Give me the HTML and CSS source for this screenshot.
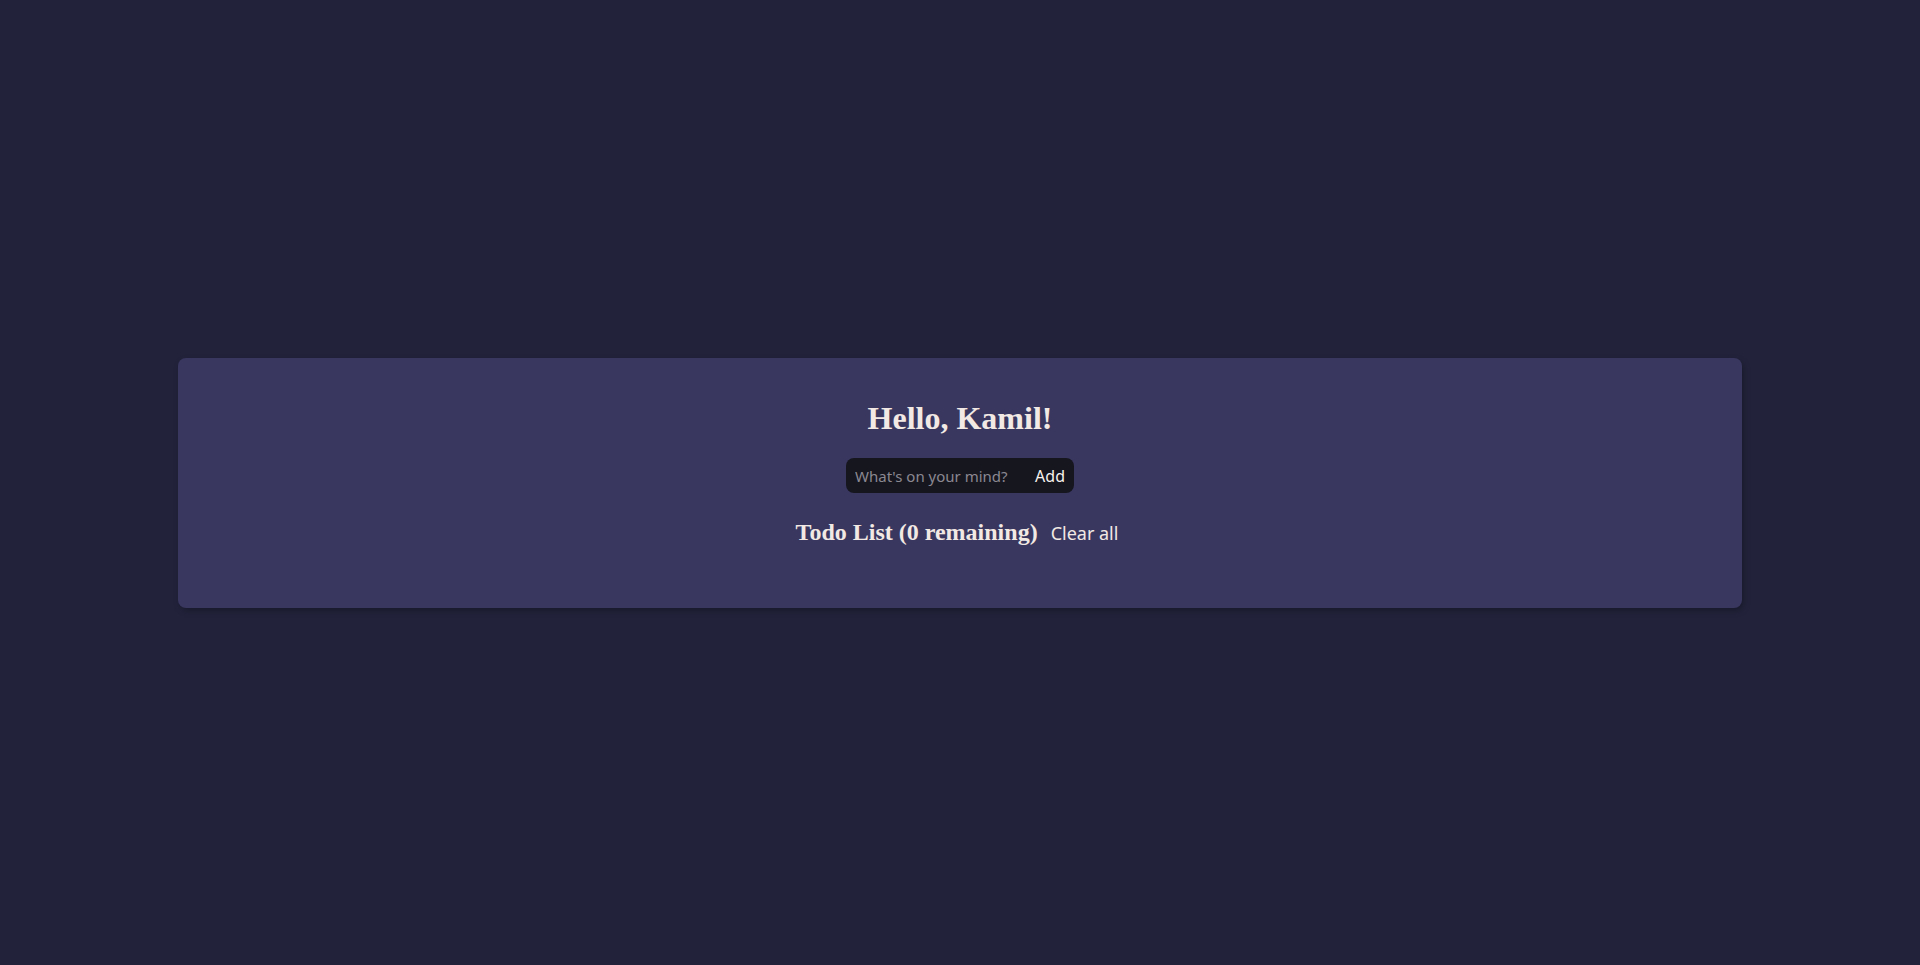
FILE: index.html
```html
<!DOCTYPE html>
<html lang="en">
<head>
<meta charset="utf-8">
<title>Todo</title>
<link rel="stylesheet" href="styles.css">
</head>
<body>
<main class="page">
  <section class="card">
    <h1 class="greeting">Hello, Kamil!</h1>
    <form class="add-form">
      <input class="add-input" type="text" placeholder="What's on your mind?">
      <button class="add-btn" type="button">Add</button>
    </form>
    <div class="list-head">
      <h2 class="list-title">Todo List (0 remaining)</h2>
      <button class="clear-btn" type="button">Clear all</button>
    </div>
    <ul class="todo-list"></ul>
  </section>
</main>
</body>
</html>
```

FILE: styles.css
```css
html, body {
  margin: 0;
  height: 100%;
}
body {
  background: #22223b;
  color: #f2e9e4;
  font-family: "Liberation Serif", serif;
}
.page {
  height: 100%;
  display: flex;
  align-items: center;
  justify-content: center;
  padding: 0 178px;
  box-sizing: border-box;
}
.card {
  flex: 1;
  height: 250px;
  box-sizing: border-box;
  background: #39375f;
  border-radius: 8px;
  box-shadow: 2px 3px 6px rgba(0, 0, 0, 0.25);
  padding-top: 42px;
  display: flex;
  flex-direction: column;
  align-items: center;
}
.greeting {
  margin: 0;
  font-size: 32px;
  line-height: 1.15;
  font-weight: bold;
}
.add-form {
  margin-top: 22px;
  display: flex;
  align-items: center;
  background: #16161f;
  border-radius: 8px;
  height: 35px;
  width: 228px;
  box-sizing: border-box;
  padding: 0 9px;
}
.add-input {
  flex: 1;
  min-width: 0;
  background: transparent;
  border: none;
  outline: none;
  padding: 0;
  color: #f2e9e4;
  font-family: "Noto Sans", sans-serif;
  font-size: 15px;
}
.add-input::placeholder {
  color: #8b8891;
}
.add-btn {
  background: transparent;
  border: none;
  padding: 0;
  color: #f7f2ee;
  font-family: "Noto Sans", sans-serif;
  font-size: 16px;
  cursor: pointer;
}
.list-head {
  margin-top: 26px;
  display: flex;
  align-items: baseline;
  gap: 13px;
  margin-left: -6px;
}
.list-title {
  margin: 0;
  font-size: 24px;
  line-height: 1.15;
  font-weight: bold;
}
.clear-btn {
  background: transparent;
  border: none;
  padding: 0;
  color: #f2e9e4;
  font-family: "Noto Sans", sans-serif;
  font-size: 18px;
  cursor: pointer;
}
.todo-list {
  margin: 0;
  padding: 0;
  list-style: none;
}
```
